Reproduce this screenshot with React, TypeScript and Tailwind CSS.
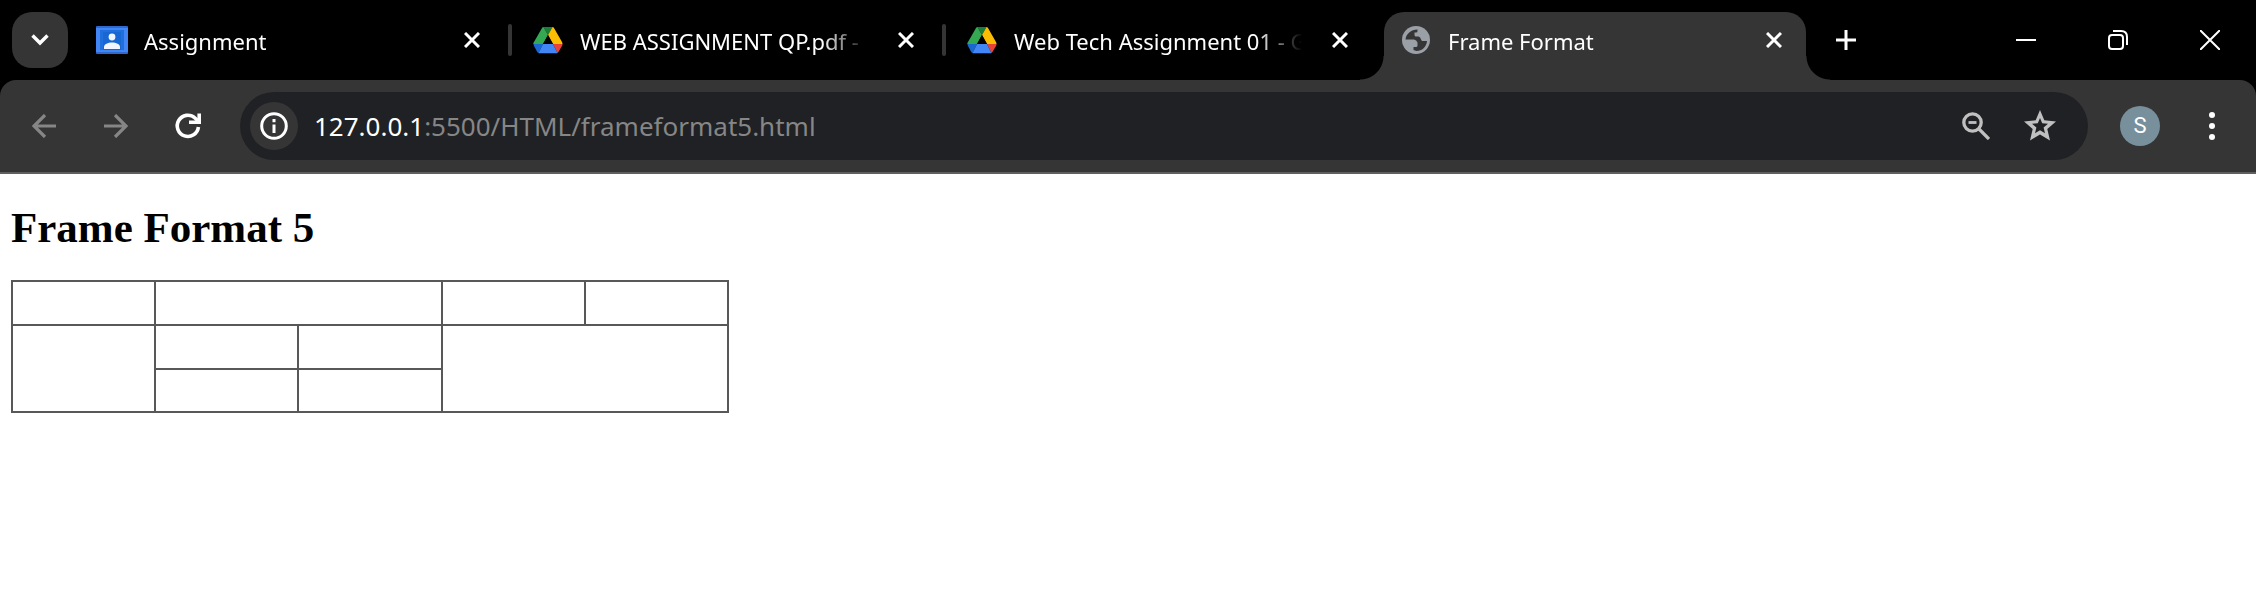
import React from "react";

const UI = "font-['Noto_Sans',sans-serif]";

type IconProps = { className?: string };

function ChevronDown() {
  return (
    <svg className="size-6" viewBox="0 0 24 24" fill="none" stroke="white" strokeWidth="3.400">
      <path d="M4.500 7.500l7.500 7.500 7.500-7.500" />
    </svg>
  );
}

function CloseIcon() {
  return (
    <svg className="size-4" viewBox="0 0 16 16" fill="none" stroke="white" strokeWidth="3">
      <path d="M1 1l14 14M15 1L1 15" />
    </svg>
  );
}

function ClassroomIcon() {
  return (
    <svg className="h-7 w-8" viewBox="0 0 32 28">
      <rect width="32" height="28" rx="1" fill="#2f68cf" />
      <rect y="2" width="32" height="24" fill="#4285f4" />
      <rect x="4" y="4" width="24" height="20" fill="#1f6fdc" />
      <rect x="7" y="6" width="18" height="18" fill="#1967d2" />
      <circle cx="16" cy="11" r="3.400" fill="#f1f5fd" />
      <path d="M8 23v-2c0-3 4-4.500 8-4.500s8 1.500 8 4.500v2z" fill="#f1f5fd" />
    </svg>
  );
}

function DriveIcon() {
  return (
    <svg className="h-7 w-8" viewBox="0 0 32 28">
      <path d="M11.500 1h9L16 9z" fill="#188038" />
      <path d="M11.500 1L16 9 6.500 18H1.500q0-1 .5-2L10 2q.6-1 1.500-1z" fill="#34a853" />
      <path d="M16 9l-5 9H1.500q0-1 .5-2z" fill="#34a853" />
      <path d="M20.500 1q1 0 1.500 1l8 14q.5 1 .5 2H21L16 9z" fill="#fbbc04" />
      <path d="M21 18h9.500q0 1-.5 2l-3 5q-.6 1.500-1.500 2z" fill="#ea4335" />
      <path d="M1.500 18H11l-4.500 9q-1-.5-1.500-1.500L2 20q-.5-1-.5-2z" fill="#1967d2" />
      <path d="M11 18h10l4.500 9q-.8.3-1.500.3H8q-1 0-1.500-.3z" fill="#4285f4" />
      <path d="M16 9l5 9H11z" fill="black" />
    </svg>
  );
}

function GlobeIcon() {
  return (
    <svg className="h-7 w-8" viewBox="0 0 32 28">
      <circle cx="16" cy="14" r="14" fill="#9aa0a6" />
      <path
        d="M5.500 13.500C6 8 11 3.500 17.500 3.500v1.500q0 1.500-1.500 1.500h-1.500V9q0 1.500 1.500 1.500h2.500q2 .5 2.500 3l1 1.500H27c-.5 6-5 10-10.500 10l-3-1v-3h2.500q1.500 0 1.500-1.500v-3q-1-2.500-3.500-3z"
        fill="#353535"
      />
    </svg>
  );
}

function Title({ children }: { children: string }) {
  return (
    <span className="min-w-0 flex-1 overflow-hidden whitespace-nowrap pt-0.5 text-[22px] leading-8 [mask-image:linear-gradient(to_right,black_calc(100%-52px),transparent_calc(100%-6px))]">
      {children}
    </span>
  );
}

function Tab({ icon, title, first }: { icon: React.ReactNode; title: string; first?: boolean }) {
  return (
    <div className={`flex h-14 shrink-0 items-center gap-4 px-4 ${first ? "w-[424px]" : "w-[422px]"}`}>
      {icon}
      <Title>{title}</Title>
      <button aria-label={`Close ${title}`} className="flex size-8 items-center justify-center">
        <CloseIcon />
      </button>
    </div>
  );
}

function Divider() {
  return <div className="mx-1 h-8 w-1 shrink-0 rounded-full bg-[#353535]" />;
}

function TabStrip() {
  return (
    <header className="flex h-20 items-start pl-3 pt-3">
      <button aria-label="Search tabs" className="flex size-14 shrink-0 items-center justify-center rounded-[20px] bg-[#353535]">
        <ChevronDown />
      </button>
      <div className="ml-3 flex h-14 items-center">
        <Tab first icon={<ClassroomIcon />} title="Assignment" />
        <Divider />
        <Tab icon={<DriveIcon />} title="WEB ASSIGNMENT QP.pdf -" />
        <Divider />
        <Tab icon={<DriveIcon />} title="Web Tech Assignment 01 - G" />
      </div>
      <div className="relative ml-3 h-[68px] rounded-t-[20px] bg-[#353535]">
        <Tab icon={<GlobeIcon />} title="Frame Format" />
        <span className="absolute -left-6 bottom-0 size-6 bg-[radial-gradient(circle_at_0_0,transparent_23px,#353535_24px)]" />
        <span className="absolute -right-6 bottom-0 size-6 bg-[radial-gradient(circle_at_100%_0,transparent_23px,#353535_24px)]" />
      </div>
      <button aria-label="New tab" className="ml-3 flex size-14 items-center justify-center">
        <svg className="size-5" viewBox="0 0 20 20" stroke="white" strokeWidth="3">
          <path d="M0 10h20M10 0v20" />
        </svg>
      </button>
      <div className="ml-auto flex h-14 shrink-0">
        <button aria-label="Minimize" className="flex w-[92px] items-center justify-center">
          <svg className="size-5" viewBox="0 0 20 20" stroke="white" strokeWidth="2">
            <path d="M0 10h20" />
          </svg>
        </button>
        <button aria-label="Restore" className="flex w-[92px] items-center justify-center">
          <svg className="size-5" viewBox="0 0 20 20" fill="none" stroke="white" strokeWidth="2">
            <rect x="1" y="5" width="14" height="14" rx="3" />
            <path d="M5 1h8q6 0 6 6v8" />
          </svg>
        </button>
        <button aria-label="Close window" className="flex w-[92px] items-center justify-center">
          <svg className="size-5" viewBox="0 0 20 20" stroke="white" strokeWidth="2">
            <path d="M0 0l20 20M20 0L0 20" />
          </svg>
        </button>
      </div>
    </header>
  );
}

function ArrowIcon({ className = "" }: IconProps) {
  return (
    <svg className={`size-6 ${className}`} viewBox="0 0 24 24" fill="none" stroke="#868686" strokeWidth="3.200">
      <path d="M24 12H3M13 1L2 12l11 11" />
    </svg>
  );
}

function Toolbar() {
  return (
    <nav className="flex items-center rounded-t-2xl border-b-2 border-[#5f5f5f] bg-[#353535] py-3 pl-5">
      <button aria-label="Back" className="flex size-12 items-center justify-center">
        <ArrowIcon />
      </button>
      <button aria-label="Forward" className="ml-6 flex size-12 items-center justify-center">
        <ArrowIcon className="rotate-180" />
      </button>
      <button aria-label="Reload" className="ml-6 flex size-12 items-center justify-center">
        <svg className="size-7" viewBox="0 0 28 28" fill="none" stroke="white" strokeWidth="3.600">
          <path d="M24.400 15A10.600 10.600 0 1 1 21 6l4 4" />
          <path d="M15 10.200h10.200V1.500" />
        </svg>
      </button>
      <div className={`ml-7 flex h-[68px] min-w-0 flex-1 items-center rounded-full bg-[#202124] pl-[10px] pr-6 text-[26px] ${UI}`}>
        <button aria-label="Site information" className="flex size-12 shrink-0 items-center justify-center rounded-full bg-[#353535]">
          <svg className="size-7" viewBox="0 0 28 28" fill="none" stroke="white" strokeWidth="3">
            <circle cx="14" cy="14" r="12.300" />
            <path d="M14 12.500V21M14 7v3.200" />
          </svg>
        </button>
        <a href="http://127.0.0.1:5500/HTML/frameformat5.html" className="ml-4 min-w-0 flex-1 truncate text-[#868686]">
          <span className="text-white">127.0.0.1</span>:5500/HTML/frameformat5.html
        </a>
        <button aria-label="Zoom" className="flex size-12 items-center justify-center">
          <svg className="size-7" viewBox="0 0 28 28" fill="none" stroke="#c0c0c0" strokeWidth="3.300">
            <circle cx="10.500" cy="10.500" r="8.700" />
            <path d="M16.500 16.500L27 27" />
            <path d="M6.500 10.500h8" strokeWidth="2.800" />
          </svg>
        </button>
        <button aria-label="Bookmark this tab" className="ml-4 flex size-12 items-center justify-center">
          <svg className="size-8" viewBox="0 0 32 32" fill="#c0c0c0" fillRule="evenodd">
            <path d="M16 0l4.300 10.300L32 11.600 23.300 19 26 30.500 16 24.400 6 30.500 8.700 19 0 11.600l11.700-1.300zM16 8l-2.200 5.300-5.800.5 4.400 3.800L11 23.200l5-3 5 3-1.400-5.600 4.400-3.800-5.800-.5z" />
          </svg>
        </button>
      </div>
      <button aria-label="Profile" className="ml-8 flex size-10 items-center justify-center rounded-full bg-[#78909c] font-['Roboto',sans-serif] text-[22px] leading-none text-white">
        S
      </button>
      <button aria-label="Menu" className="ml-7 mr-5 flex size-12 items-center justify-center">
        <svg className="size-7" viewBox="0 0 28 28" fill="white">
          <circle cx="14" cy="3" r="3" />
          <circle cx="14" cy="14" r="3" />
          <circle cx="14" cy="25" r="3" />
        </svg>
      </button>
    </nav>
  );
}

const CELL = "border-2 border-[#585858] p-0";

function FrameTable() {
  return (
    <table aria-label="Frame format" className="mt-[26px] w-[718px] table-fixed border-collapse">
      <tbody>
        <tr className="h-11">
          <td className={CELL} />
          <td className={CELL} colSpan={2} />
          <td className={CELL} />
          <td className={CELL} />
        </tr>
        <tr className="h-11">
          <td className={CELL} rowSpan={2} />
          <td className={CELL} />
          <td className={CELL} />
          <td className={CELL} colSpan={2} rowSpan={2} />
        </tr>
        <tr className="h-[43px]">
          <td className={CELL} />
          <td className={CELL} />
        </tr>
      </tbody>
    </table>
  );
}

export default function App() {
  return (
    <div className="min-h-screen bg-white">
      <div className={`bg-black text-white ${UI}`}>
        <TabStrip />
        <Toolbar />
      </div>
      <main className="px-[11px] pt-7 font-['Liberation_Serif',serif] text-black">
        <h1 className="text-[43px] font-bold leading-[52px]">Frame Format 5</h1>
        <FrameTable />
      </main>
    </div>
  );
}
